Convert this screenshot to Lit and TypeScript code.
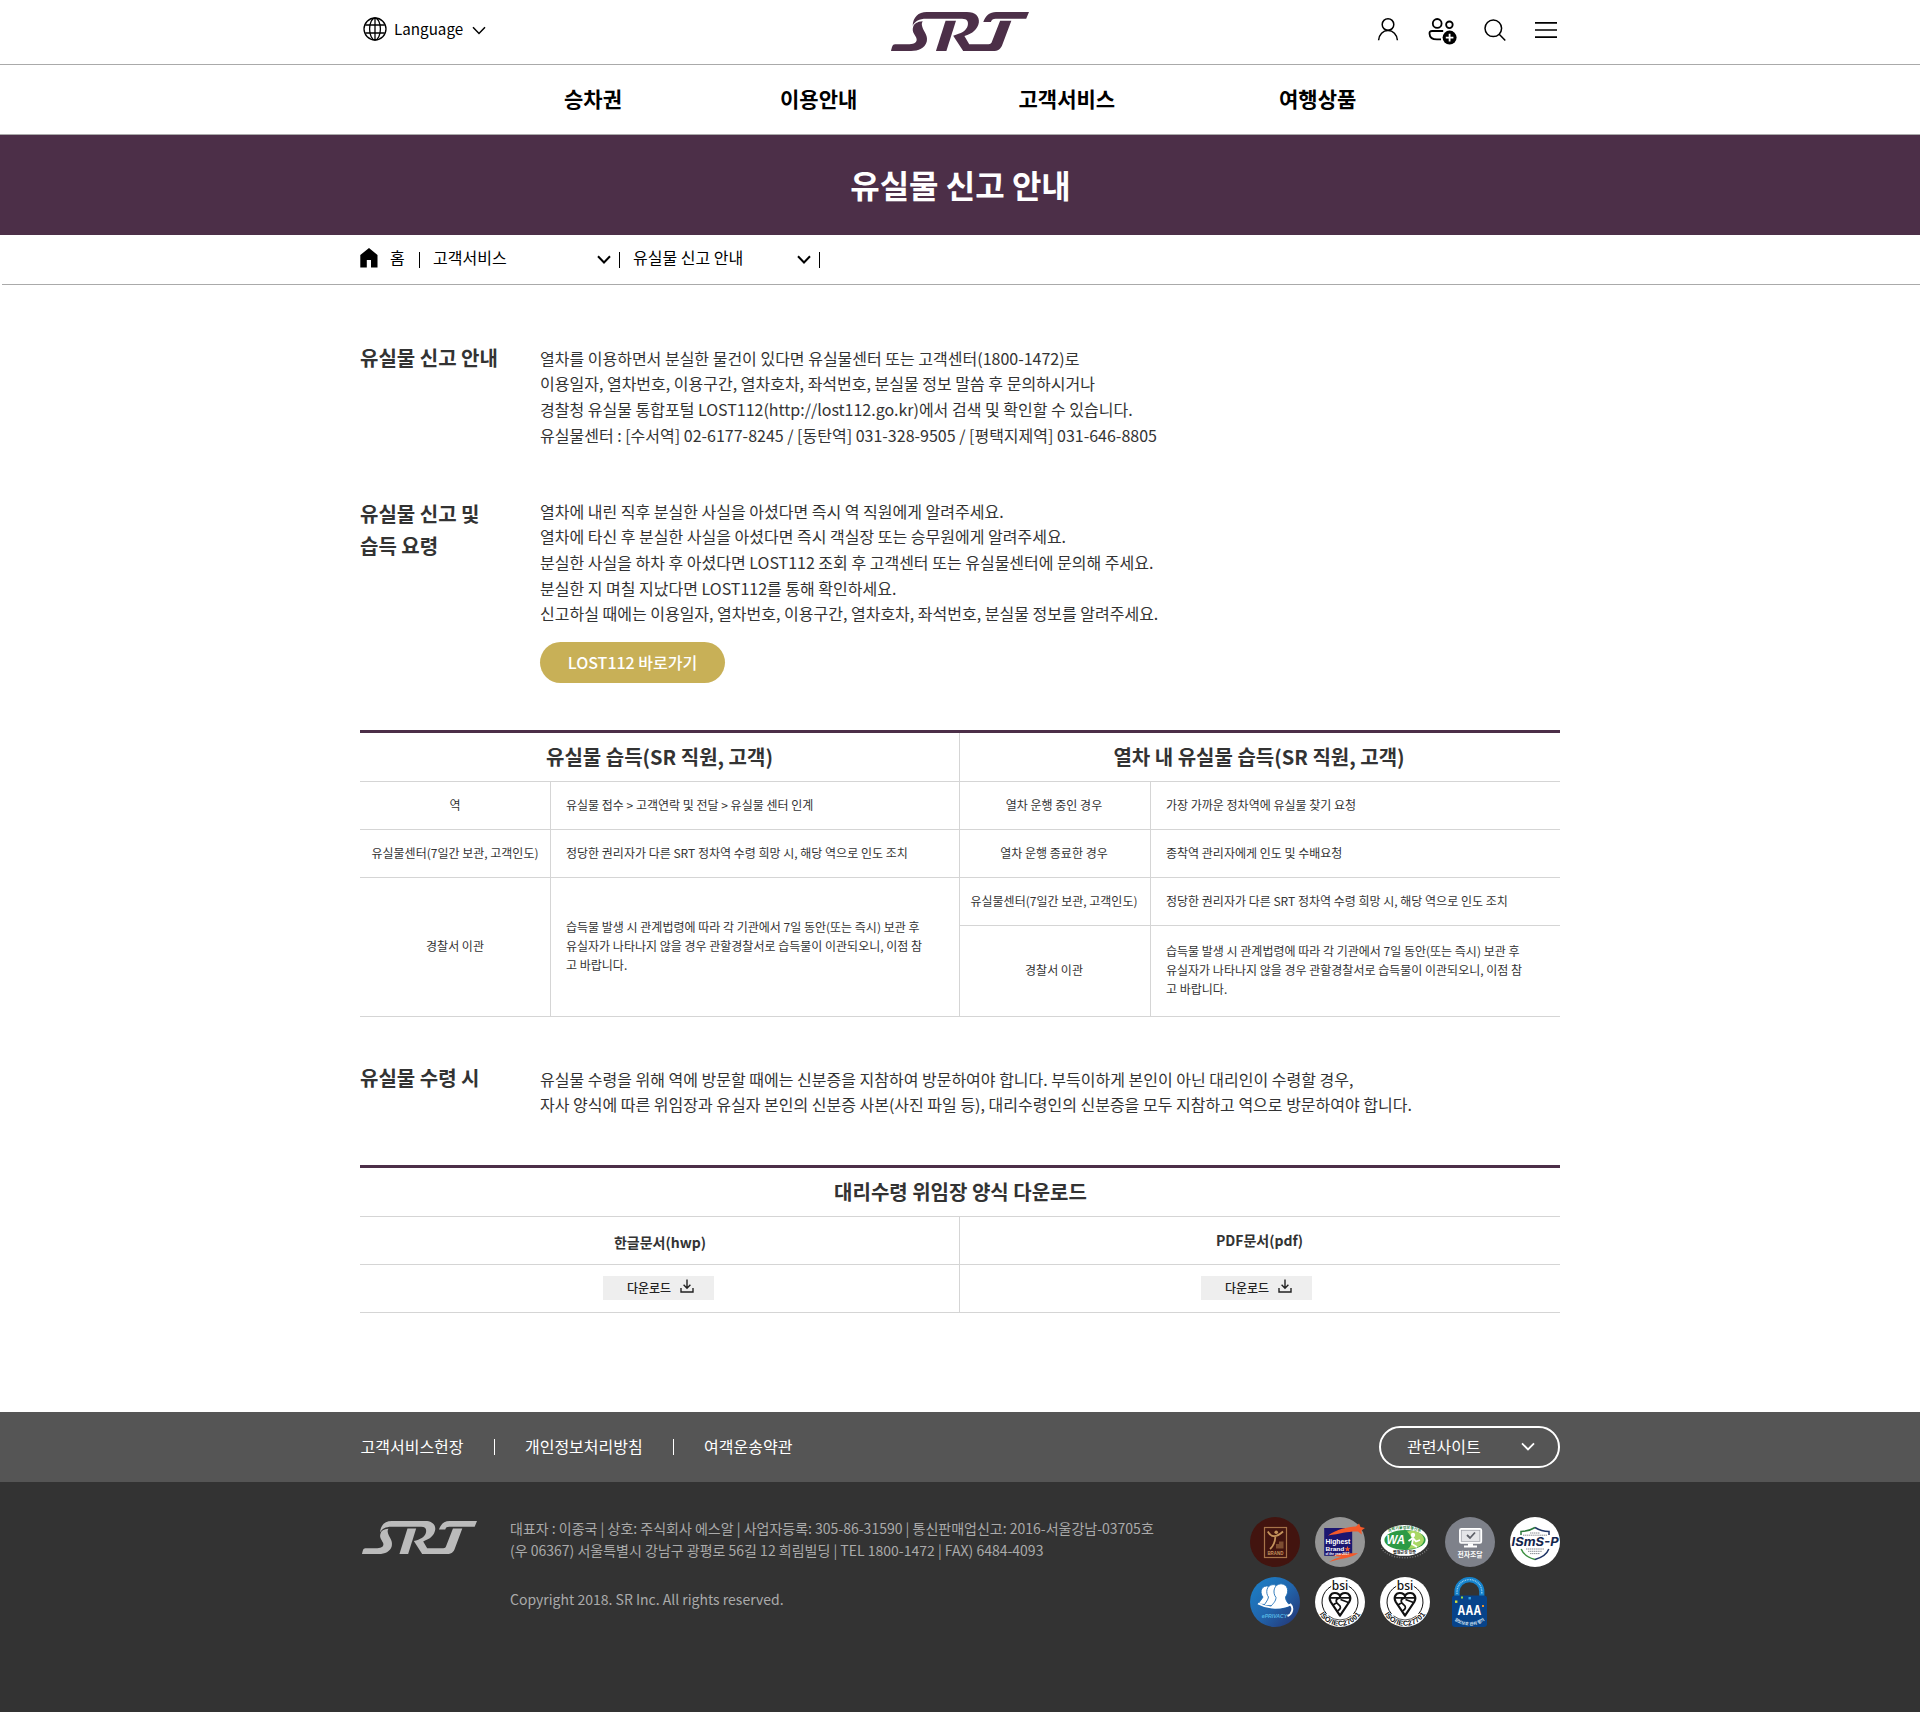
import { LitElement, html, css, svg } from "lit";
import { customElement, property } from "lit/decorators.js";
import { classMap } from "lit/directives/class-map.js";

@customElement("srt-logo")
export class SrtLogo extends LitElement {
  static styles = css`
    :host { display: block; }
    svg { display: block; width: 100%; height: 100%; }
  `;
  render() {
    return html`<svg viewBox="36 65 344 97" preserveAspectRatio="none" fill="currentColor">
      <path d="M90 99C91 78 104 65 125 65H225C247 65 257 77 255 91C252 108 240 118 219 125L231 145H279C284 145 286 144 288 138L308 87H336L314 145C310 157 303 162 290 162H216L191 124C211 118 223 113 227 100C230 89 226 82 213 82H124C106 82 96 88 90 99Z" />
      <path d="M266 90C272 74 282 65 298 65H380L373 82H297C290 82 287 84 285 90Z" />
      <path d="M172 87H198L174 162H148Z" />
      <path d="M36 162C38 154 39 145 46 145H82C95 145 103 139 99 129C94 119 88 114 91 103C93 94 101 89 115 88C111 93 113 100 116 107C122 119 128 126 125 139C120 155 105 162 86 162Z" />
    </svg>`;
  }
}

@customElement("srt-chevron")
export class SrtChevron extends LitElement {
  @property({ type: Number }) weight = 1.5;
  static styles = css`
    :host { display: block; width: 14px; height: 9px; }
    svg { display: block; width: 100%; height: 100%; }
  `;
  render() {
    return html`<svg viewBox="0 0 14 9" fill="none" stroke="currentColor" stroke-width=${this.weight}>
      <path d="M1 1.3L7 7.5L13 1.3" />
    </svg>`;
  }
}

const globeIcon = html`<svg class="ico-globe" viewBox="0 0 24 24" fill="none" stroke="#000" stroke-width="1.3">
  <circle cx="12" cy="12" r="11" /><ellipse cx="12" cy="12" rx="5.4" ry="11" /><path d="M12 1V23M2.2 8H21.8M2.2 16H21.8" />
</svg>`;

const personIcon = html`<svg width="22" height="24" viewBox="0 0 22 24" fill="none" stroke="#000" stroke-width="1.5">
  <circle cx="11" cy="7.5" r="5.8" /><path d="M1.6 23.2C2 17.5 6 13.5 11 13.5S20 17.5 20.4 23.2" />
</svg>`;

const groupIcon = html`<svg width="30" height="30" viewBox="0 0 30 30" fill="none" stroke="#000" stroke-width="1.8">
  <circle cx="9.2" cy="6.4" r="4.4" /><circle cx="21.4" cy="7.8" r="3.3" />
  <path d="M15.2 14H4.2C2.2 14 1.4 15 1.5 16.6C1.7 20.2 4.6 22.4 9 22.4H13" />
  <circle cx="21.6" cy="20.6" r="7" fill="#000" stroke="none" /><path d="M21.6 16.8V24.4M17.8 20.6H25.4" stroke="#fff" />
</svg>`;

const searchIcon = html`<svg width="22" height="23" viewBox="0 0 22 23" fill="none" stroke="#000" stroke-width="1.5">
  <circle cx="9.3" cy="9.3" r="8.3" /><path d="M15.2 15.2L21.3 21.5" />
</svg>`;

const menuIcon = html`<svg width="22" height="18" viewBox="0 0 22 18" stroke="#000" stroke-width="1.7">
  <path d="M0 1.8H22M0 9H22M0 16.2H22" />
</svg>`;

const homeIcon = html`<svg class="ico-home" width="18" height="20" viewBox="0 0 18 20">
  <path d="M9 0L17.5 7V19.6H11V12H6.8V19.6H0.3V7Z" fill="#000" />
</svg>`;

const downloadIcon = html`<svg class="ico-down" width="14" height="14" viewBox="0 0 14 14" fill="none" stroke="#222" stroke-width="1.4">
  <path d="M7 0.5V9M3.6 5.8L7 9.2L10.4 5.8M1 9V13H13V9" />
</svg>`;

const bsi = (id: string, code: string) => svg`
  <circle cx="25" cy="25" r="25" fill="#fff" />
  <path id=${id} d="M1.2 25A23.8 23.8 0 0 0 48.8 25" fill="none" />
  <path d="M16.2 9.3A18 18 0 0 0 11.5 36.9M33.8 9.3A18 18 0 0 1 38.5 36.9" fill="none" stroke="#111" stroke-width="1" />
  <path d="M13.5 38.8A18 18 0 0 0 36.5 38.8" fill="none" stroke="#111" stroke-width="0.7" />
  <g fill="none" stroke="#111" stroke-width="2.2" stroke-linejoin="round">
    <path d="M25 38.6L15.8 25C13.2 20.5 15.6 16 19.8 16C23 16 25 18 25 19.5C25 18 27 16 30.2 16C34.4 16 36.8 20.5 34.2 25Z" />
    <path d="M15 20.8H35M25 20.8C20.5 21.5 20 25 23.5 27.5C26.5 29.5 26 32 22.5 34M33.5 25.5L25.5 22.5M18 28L22 25.5" stroke-width="1.7" />
  </g>
  <text x="25" y="12.8" font-family="Noto Sans, sans-serif" font-size="12" font-weight="500" text-anchor="middle" fill="#111">bsi</text>
  <text font-size="7.2" font-family="Liberation Sans, sans-serif" font-weight="700" fill="#111" text-anchor="middle" letter-spacing="0.25"><textPath href=${"#" + id} startOffset="50%">${code}</textPath></text>`;

const badges = [
  svg`<circle cx="25" cy="25" r="25" fill="#42140f" />
    <rect x="14.5" y="10.5" width="22" height="30" fill="none" stroke="#a8744a" stroke-width="1.2" />
    <path d="M17.8 14.5C21 20.5 26 21 33 14.5M25.4 19.5C25 26 23.5 29 20 32" fill="none" stroke="#c4935c" stroke-width="1.8" />
    <circle cx="26.2" cy="15.2" r="1.8" fill="#c4935c" /><path d="M26 27H29V24.5H33.5V31.5H26Z" fill="#7d4d31" />
    <text x="17.4" y="38" font-size="5.4" font-weight="700" font-family="Liberation Sans, sans-serif" fill="#c4935c" textLength="16" lengthAdjust="spacingAndGlyphs">BRAND</text>`,
  svg`<circle cx="25" cy="25" r="25" fill="#969696" /><rect x="9.2" y="11" width="28" height="27.8" fill="#1c1670" />
    <path d="M13 18.5C22 12.5 32 10 41 9.6L44 6.5L45.6 10L50 11L46.4 13.4L46.8 17.5L43 14.5C34 14 26 16.5 13 18.5Z" fill="#f4592a" />
    <path d="M18 39C25 36 33 36.5 43 36C37 41 27 41 14 45C18 42.5 22 41 27 39.8Z" fill="#f4592a" />
    <g font-weight="700" fill="#fff" font-family="Liberation Sans, sans-serif">
      <text x="10.4" y="27.4" font-size="6.7" textLength="25" lengthAdjust="spacingAndGlyphs">Highest</text>
      <text x="10.4" y="34.3" font-size="6" textLength="19" lengthAdjust="spacingAndGlyphs">Brand</text>
      <text x="10.4" y="38.4" font-size="3" textLength="24" lengthAdjust="spacingAndGlyphs">of the year 2017</text>
    </g>
    <path d="M32.5 29L33.3 31.2H35.5L33.8 32.6L34.4 34.8L32.5 33.5L30.6 34.8L31.2 32.6L29.5 31.2H31.7Z" fill="#f4592a" />`,
  svg`<path id="wa-top" d="M5 19.5C11 9 38 9 44 19.5" fill="none" />
    <ellipse cx="24.4" cy="23.4" rx="23.7" ry="15.4" fill="#fff" /><ellipse cx="25" cy="23" rx="20.6" ry="10" fill="#2c9a45" />
    <path d="M27 14.5C36 12 44 17 44 23C43 29 36 32 28 32C33 28 33 19 27 14.5Z" fill="#a9d765" />
    <circle cx="33" cy="18" r="2.2" fill="#fff" /><path d="M28.5 24L33 21L36 24.5L40 23M33 22.5L32 27L37 30" stroke="#fff" stroke-width="1.7" fill="none" />
    <path d="M1.5 31C8 44 41 44 48 31" fill="none" stroke="#777" stroke-width="1.4" stroke-dasharray="1 1.6" />
    <text x="6.6" y="27.4" font-size="12" font-weight="700" font-style="italic" font-family="Liberation Sans, sans-serif" fill="#fff" textLength="18.5" lengthAdjust="spacingAndGlyphs">WA</text>
    <text font-size="3.9" font-weight="700" fill="#26823a" text-anchor="middle"><textPath href="#wa-top" startOffset="50%">과학기술정보통신부</textPath></text>
    <text x="24.5" y="37.4" font-size="4" font-weight="700" fill="#222" text-anchor="middle">웹접근성 인증</text>`,
  svg`<circle cx="25" cy="25" r="25" fill="#7e818a" />
    <rect x="14.8" y="11.8" width="21.6" height="14.2" rx="1.5" fill="#e4e5e8" stroke="#fff" stroke-width="1.5" />
    <rect x="16.4" y="13.4" width="18.4" height="11" fill="none" stroke="#9a9ca4" stroke-width="0.6" />
    <path d="M22 18L25 21L30 15.5" fill="none" stroke="#5d6068" stroke-width="1.8" /><path d="M23 26.5H28V28.5H32V30.5H19V28.5H23Z" fill="#fff" />
    <text x="12.6" y="40.2" font-size="7" font-weight="700" fill="#fff" textLength="25" lengthAdjust="spacingAndGlyphs">전자조달</text>`,
  svg`<circle cx="25" cy="25" r="25" fill="#fff" />
    <path d="M11 18V14.5C17 14.5 21 13 25 10.5" fill="none" stroke="#2c7a3c" stroke-width="1.5" /><path d="M25 10.5C29 13 33 14.5 39 14.5V18" fill="none" stroke="#1f3566" stroke-width="1.5" />
    <path d="M11.2 32C13 37 18 40.5 25 42.5" fill="none" stroke="#3b8f3f" stroke-width="1.5" /><path d="M25 42.5C32 40.5 37 37 38.8 32" fill="none" stroke="#1f3566" stroke-width="1.5" />
    <path d="M20 16H30M13 18.2H37M16 32H34M18 34.3H32M20 36.6H30" stroke="#8a8f95" stroke-width="1" stroke-dasharray="1.4 0.5" />
    <text x="1.6" y="29.4" font-size="12" font-weight="700" font-style="italic" font-family="Inter, Liberation Sans, sans-serif" fill="#14264d" textLength="47" lengthAdjust="spacingAndGlyphs">ISmS-P</text>`,
  svg`<defs><linearGradient id="blue" x1="0" y1="0" x2="1" y2="1"><stop offset="0.1" stop-color="#1c7dc4" /><stop offset="0.5" stop-color="#2166ad" /><stop offset="1" stop-color="#25306e" /></linearGradient></defs>
    <circle cx="25" cy="25" r="25" fill="url(#blue)" />
    <g fill="#fff" stroke="#1f6fb5" stroke-width="0.9">
      <path d="M8 27C10 24 12 22 13 20C10 17 10 9.5 16.5 9C21 8.8 22 13 21 17V28Z" />
      <path d="M14 28.5C16 25 18 23 18.5 20C15.5 16.5 16 8 23 7.6C28 7.5 29 13 27 18V29Z" />
      <path d="M20 30C23 27 26 24 26 20.5C22 15.5 24 7 31 6.8C38 7 39.5 15 35.5 20C35.5 24 38 26 40 28.5C34 32 26 31.5 20 30Z" /></g>
    <path d="M8 26.5C18 32 32 32 40.5 27.5C44 31 42 37.5 37.5 39" fill="none" stroke="#fff" stroke-width="1.9" />
    <text x="11.8" y="40.8" font-size="6.2" font-weight="700" font-style="italic" font-family="Liberation Sans, sans-serif" fill="#54b5e2" textLength="25.5" lengthAdjust="spacingAndGlyphs">ePRIVACY</text>`,
  bsi("bsi-a", "ISO/IEC27001"),
  bsi("bsi-b", "ISO/IEC27701"),
  svg`<path d="M12 19V14.6A12.4 12 0 0 1 36.8 14.6V19" fill="none" stroke="#1583cd" stroke-width="5.2" />
    <path d="M12 17V14.6A12.4 12 0 0 1 36.8 14.6V17" fill="none" stroke="#8cc8ec" stroke-width="1.4" stroke-dasharray="1 0.7" />
    <rect x="7" y="18.5" width="35" height="31.5" rx="3" fill="#07438a" />
    <rect x="10" y="23.5" width="2.4" height="2.4" fill="#d6e03c" /><rect x="16" y="19.5" width="2" height="2" fill="#9bd93c" /><rect x="23.5" y="20" width="2.4" height="2.4" fill="#35a6e8" /><rect x="37" y="28" width="2" height="2" fill="#e7902e" />
    <text x="12.6" y="38.4" font-size="13" font-weight="700" font-family="Inter, Liberation Sans, sans-serif" fill="#fff" textLength="23.6" lengthAdjust="spacingAndGlyphs">AAA</text>
    <path id="lock-text" d="M10 43.5C17 50 32 50 39 43.5" fill="none" />
    <text font-size="4.2" font-weight="700" fill="#dbe9f6" text-anchor="middle"><textPath href="#lock-text" startOffset="50%">정보보호 관리 평가</textPath></text>`,
];

interface Cell { lines: string[]; label?: boolean; edge?: boolean; col: number; row: number; span?: number; }

const policeNote = [
  "습득물 발생 시 관계법령에 따라 각 기관에서 7일 동안(또는 즉시) 보관 후",
  "유실자가 나타나지 않을 경우 관할경찰서로 습득물이 이관되오니, 이점 참",
  "고 바랍니다.",
];
const transferNote = "정당한 권리자가 다른 SRT 정차역 수령 희망 시, 해당 역으로 인도 조치";

const cells: Cell[] = [
  { col: 1, row: 2, label: true, lines: ["역"] },
  { col: 2, row: 2, lines: ["유실물 접수 > 고객연락 및 전달 > 유실물 센터 인계"] },
  { col: 3, row: 2, label: true, lines: ["열차 운행 중인 경우"] },
  { col: 4, row: 2, edge: true, lines: ["가장 가까운 정차역에 유실물 찾기 요청"] },
  { col: 1, row: 3, label: true, lines: ["유실물센터(7일간 보관, 고객인도)"] },
  { col: 2, row: 3, lines: [transferNote] },
  { col: 3, row: 3, label: true, lines: ["열차 운행 종료한 경우"] },
  { col: 4, row: 3, edge: true, lines: ["종착역 관리자에게 인도 및 수배요청"] },
  { col: 1, row: 4, span: 2, label: true, lines: ["경찰서 이관"] },
  { col: 2, row: 4, span: 2, lines: policeNote },
  { col: 3, row: 4, label: true, lines: ["유실물센터(7일간 보관, 고객인도)"] },
  { col: 4, row: 4, edge: true, lines: [transferNote] },
  { col: 3, row: 5, label: true, lines: ["경찰서 이관"] },
  { col: 4, row: 5, edge: true, lines: policeNote },
];

const lines = (items: string[]) => items.map((t) => html`<div>${t}</div>`);

@customElement("app-root")
export class AppRoot extends LitElement {
  static styles = css`
    :host { display: block; background: #fff; color: #333; font-family: "Noto Sans CJK KR", "Noto Sans", sans-serif; font-size: 16px; line-height: 1.6; }
    * { box-sizing: border-box; }
    svg { display: block; flex: none; }
    h1, h2, h3 { margin: 0; }
    .wrap { width: 1200px; margin: 0 auto; }

    .top { height: 65px; border-bottom: 1px solid #aaa; color: #000; }
    .top-row { display: grid; grid-template-columns: 1fr 138px 1fr; height: 64px; }
    .lang { display: flex; align-items: flex-start; padding: 17px 0 0 3px; }
    .ico-globe { width: 24px; height: 24px; }
    .lang-label { font-size: 15.2px; line-height: 24px; margin: -1px 9px 0 7px; }
    .lang-chev { margin-top: 9px; }
    .logo { width: 138px; height: 39px; margin: 12px 0 0; color: #4c2f48; }
    .tools { display: flex; justify-content: flex-end; padding-right: 3px; }
    .tool-person { margin: 17px 29px 0 0; }
    .tool-group { margin: 17px 26px 0 0; }
    .tool-search { margin: 19px 29px 0 0; }
    .tool-menu { margin: 21px 0 0; }

    .gnb { height: 70px; border-bottom: 1px solid #aaa; }
    .gnb-row { display: flex; align-items: center; height: 67px; padding-left: 204px; font-size: 21px; font-weight: 700; color: #000; }
    .gnb-1 { width: 216px; }
    .gnb-2 { width: 238.5px; }
    .gnb-3 { width: 260.5px; }

    .banner { height: 100px; padding: 0 0 2px 1px; background: #4c2f48; display: flex; align-items: center; justify-content: center; }
    .banner-title { color: #fff; font-size: 32px; font-weight: 700; line-height: 46px; }

    .crumbs { height: 50px; margin-left: 2px; border-bottom: 1px solid #aaa; }
    .crumb-row { display: flex; height: 49px; width: 1200px; margin-left: 358px; padding-top: 10px; line-height: 24px; color: #000; }
    .ico-home { margin: 3px 12px 0 0; }
    .bar { width: 1px; height: 16px; background: #000; margin-top: 7px; }
    .crumb-home { width: 29px; }
    .crumb { display: flex; width: 199px; padding-left: 13px; justify-content: space-between; }
    .crumb-chev { margin: 10px 8px 0 0; }

    .section { display: grid; grid-template-columns: 180px 1fr; }
    .sec-title { font-size: 20px; line-height: 32px; font-weight: 700; }
    .guide { padding-top: 60.8px; }
    .guide .sec-title { margin-top: -3.8px; }
    .howto { padding-top: 50.6px; }
    .howto .sec-title { margin-top: -0.8px; }
    .claim { padding-top: 49.8px; }
    .claim .sec-title { margin-top: -4.8px; }
    .lost-btn { display: flex; align-items: center; justify-content: center; width: 185px; height: 41px; margin-top: 15.2px; border-radius: 21px; background: #c8b057; color: #fff; font-weight: 500; }

    .table { display: grid; border-top: 3px solid #4c2f48; }
    .lost-table { grid-template-columns: 191px 409px 191px 409px; grid-template-rows: 49px 48px 48px 48px 91px; margin-top: 47px; }
    .head { grid-column: span 2; display: flex; align-items: center; justify-content: center; font-size: 20px; font-weight: 700; border-bottom: 1px solid #d5d5d5; border-right: 1px solid #d5d5d5; }
    .head.edge { border-right: 0; }
    .head-r { padding-right: 2px; }
    .head-f { padding-left: 1px; }
    .cell { display: flex; flex-direction: column; justify-content: center; padding: 0 0 2px 15px; font-size: 12px; line-height: 19px; border-bottom: 1px solid #d5d5d5; border-right: 1px solid #d5d5d5; white-space: nowrap; }
    .cell.label { align-items: center; padding-left: 0; }
    .cell.label.c3 { padding-right: 2px; }
    .cell.edge { border-right: 0; }
    .c1 { grid-column: 1; } .c2 { grid-column: 2; } .c3 { grid-column: 3; } .c4 { grid-column: 4; }
    .r2 { grid-row: 2; } .r3 { grid-row: 3; } .r4 { grid-row: 4; } .r5 { grid-row: 5; }
    .tall { grid-row: 4 / span 2; }

    .form-table { grid-template-columns: 600px 600px; grid-template-rows: 49px 48px 48px; margin-top: 47px; }
    .form-cell { display: flex; align-items: center; justify-content: center; font-size: 14px; font-weight: 700; border-bottom: 1px solid #d5d5d5; border-right: 1px solid #d5d5d5; }
    .form-cell.edge { border-right: 0; }
    .form-cell.low { padding: 3px 0 0 1px; }
    .form-cell.pdf { padding-right: 1px; }
    .form-cell.nudge { padding-right: 7px; }
    .down { display: flex; align-items: flex-start; width: 111px; height: 24px; padding-left: 24px; background: #eee; color: #222; font-size: 12px; font-weight: 500; line-height: 24px; }
    .down-l { margin-right: 2px; }
    .ico-down { margin: 3px 0 0 9px; }

    .foot-bar { height: 70px; margin-top: 99px; background: #555; color: #fff; }
    .foot-row { display: flex; align-items: center; height: 70px; padding-left: 0.5px; }
    .foot-sep { width: 1px; height: 16px; margin: 0 30px 0 30.4px; background: #fff; }
    .family { display: flex; align-items: center; justify-content: space-between; width: 181px; height: 42px; margin-left: auto; padding: 0 23px 0 26px; border: 2px solid #fff; border-radius: 21px; }
    .foot { height: 230px; background: #333; color: #aaa; }
    .foot-main { display: flex; }
    .foot-logo { width: 115px; height: 33px; margin: 39px 33px 0 2px; color: #bbb; }
    .info { margin-top: 35px; font-size: 14px; line-height: 22px; }
    .copy { margin-top: 27px; }
    .badges { display: grid; grid-template-columns: repeat(5, 50px); gap: 10px 15px; margin: 35px 0 0 auto; }
    .badge { width: 50px; height: 50px; overflow: visible; font-family: "Noto Sans CJK KR", sans-serif; }
  `;

  render() {
    return html`
      <header>
        <div class="top">
          <div class="wrap top-row">
            <div class="lang">${globeIcon}<span class="lang-label">Language</span><srt-chevron class="lang-chev"></srt-chevron></div>
            <srt-logo class="logo"></srt-logo>
            <div class="tools">
              <div class="tool-person">${personIcon}</div><div class="tool-group">${groupIcon}</div>
              <div class="tool-search">${searchIcon}</div><div class="tool-menu">${menuIcon}</div>
            </div>
          </div>
        </div>
        <nav class="gnb">
          <div class="wrap gnb-row">
            <span class="gnb-1">승차권</span><span class="gnb-2">이용안내</span><span class="gnb-3">고객서비스</span><span>여행상품</span>
          </div>
        </nav>
      </header>
      <div class="banner"><h1 class="banner-title">유실물 신고 안내</h1></div>
      <div class="crumbs">
        <div class="crumb-row">
          ${homeIcon}<span class="crumb-home">홈</span><i class="bar"></i>
          <div class="crumb">고객서비스<srt-chevron class="crumb-chev" .weight=${2}></srt-chevron></div><i class="bar"></i>
          <div class="crumb">유실물 신고 안내<srt-chevron class="crumb-chev" .weight=${2}></srt-chevron></div><i class="bar"></i>
        </div>
      </div>
      <main class="wrap">
        <section class="section guide">
          <h2 class="sec-title">유실물 신고 안내</h2>
          <div>${lines([
            "열차를 이용하면서 분실한 물건이 있다면 유실물센터 또는 고객센터(1800-1472)로",
            "이용일자, 열차번호, 이용구간, 열차호차, 좌석번호, 분실물 정보 말씀 후 문의하시거나",
            "경찰청 유실물 통합포털 LOST112(http://lost112.go.kr)에서 검색 및 확인할 수 있습니다.",
            "유실물센터 : [수서역] 02-6177-8245 / [동탄역] 031-328-9505 / [평택지제역] 031-646-8805",
          ])}</div>
        </section>
        <section class="section howto">
          <h2 class="sec-title">유실물 신고 및<br />습득 요령</h2>
          <div>${lines([
            "열차에 내린 직후 분실한 사실을 아셨다면 즉시 역 직원에게 알려주세요.",
            "열차에 타신 후 분실한 사실을 아셨다면 즉시 객실장 또는 승무원에게 알려주세요.",
            "분실한 사실을 하차 후 아셨다면 LOST112 조회 후 고객센터 또는 유실물센터에 문의해 주세요.",
            "분실한 지 며칠 지났다면 LOST112를 통해 확인하세요.",
            "신고하실 때에는 이용일자, 열차번호, 이용구간, 열차호차, 좌석번호, 분실물 정보를 알려주세요.",
          ])}<a class="lost-btn">LOST112 바로가기</a></div>
        </section>
        <div class="table lost-table">
          <div class="head">유실물 습득(SR 직원, 고객)</div>
          <div class="head edge head-r">열차 내 유실물 습득(SR 직원, 고객)</div>
          ${cells.map((c) => html`<div class=${classMap({
            cell: true, label: !!c.label, edge: !!c.edge, tall: !!c.span, ["c" + c.col]: true, ["r" + c.row]: !c.span,
          })}>${lines(c.lines)}</div>`)}
        </div>
        <section class="section claim">
          <h2 class="sec-title">유실물 수령 시</h2>
          <div>${lines([
            "유실물 수령을 위해 역에 방문할 때에는 신분증을 지참하여 방문하여야 합니다. 부득이하게 본인이 아닌 대리인이 수령할 경우,",
            "자사 양식에 따른 위임장과 유실자 본인의 신분증 사본(사진 파일 등), 대리수령인의 신분증을 모두 지참하고 역으로 방문하여야 합니다.",
          ])}</div>
        </section>
        <div class="table form-table">
          <div class="head edge head-f">대리수령 위임장 양식 다운로드</div>
          <div class="form-cell low">한글문서(hwp)</div>
          <div class="form-cell edge pdf">PDF문서(pdf)</div>
          <div class="form-cell"><a class="down down-l">다운로드${downloadIcon}</a></div>
          <div class="form-cell edge nudge"><a class="down">다운로드${downloadIcon}</a></div>
        </div>
      </main>
      <footer>
        <div class="foot-bar">
          <div class="wrap foot-row">
            <span>고객서비스헌장</span><i class="foot-sep"></i><span>개인정보처리방침</span><i class="foot-sep"></i><span>여객운송약관</span>
            <div class="family">관련사이트<srt-chevron .weight=${1.8}></srt-chevron></div>
          </div>
        </div>
        <div class="foot">
          <div class="wrap foot-main">
            <srt-logo class="foot-logo"></srt-logo>
            <div class="info">
              <div>대표자 : 이종국 | 상호: 주식회사 에스알 | 사업자등록: 305-86-31590 | 통신판매업신고: 2016-서울강남-03705호</div>
              <div>(우 06367) 서울특별시 강남구 광평로 56길 12 희림빌딩 | TEL 1800-1472 | FAX) 6484-4093</div>
              <div class="copy">Copyright 2018. SR Inc. All rights reserved.</div>
            </div>
            <div class="badges">${badges.map((b) => html`<svg class="badge" viewBox="0 0 50 50">${b}</svg>`)}</div>
          </div>
        </div>
      </footer>
    `;
  }
}
